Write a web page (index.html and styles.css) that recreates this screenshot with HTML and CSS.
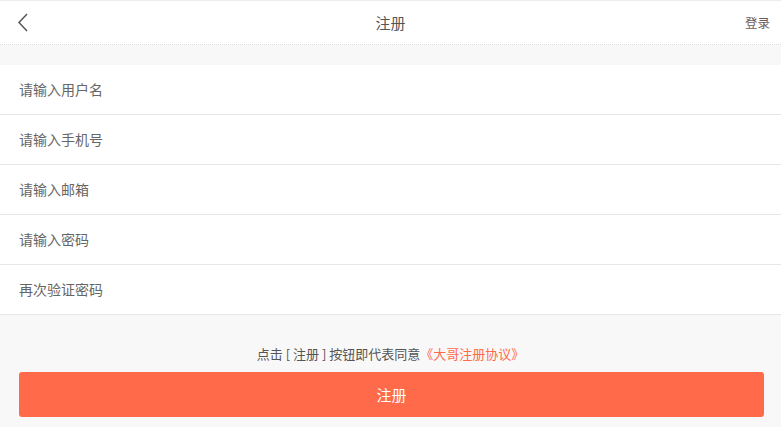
FILE: index.html
```html
<!DOCTYPE html>
<html lang="zh-CN">
<head>
  <meta charset="UTF-8">
  <meta name="viewport" content="width=device-width, initial-scale=1.0">
  <title>注册</title>
  <link rel="stylesheet" href="styles.css">
</head>
<body>
  <header class="topbar">
    <a class="back" href="#">
      <svg width="12" height="20" viewBox="0 0 12 20">
        <path d="M10 1 L2 9.5 L10 18" fill="none" stroke="#555" stroke-width="1.5"/>
      </svg>
    </a>
    <h1 class="title">注册</h1>
    <a class="login" href="#">登录</a>
  </header>

  <div class="form">
    <div class="row">请输入用户名</div>
    <div class="row">请输入手机号</div>
    <div class="row">请输入邮箱</div>
    <div class="row">请输入密码</div>
    <div class="row">再次验证密码</div>
  </div>

  <p class="agree">点击 [ 注册 ] 按钮即代表同意<span class="link">《大哥注册协议》</span></p>
  <button class="submit">注册</button>
</body>
</html>
```

FILE: styles.css
```css
body {
  margin: 0;
  font-family: "Noto Sans CJK SC", "Liberation Sans", sans-serif;
  background-color: #f8f8f8;
  color: #555;
}
.topbar {
  height: 43px;
  border-top: 1px solid #ececec;
  border-bottom: 1px dotted #dcdcdc;
  background: #fff;
  display: flex;
  align-items: center;
  justify-content: space-between;
  padding: 0 11px 0 17px;
}
.back {
  display: flex;
  width: 40px;
}
.title {
  margin: 0 0 0 -6px;
  font-size: 15px;
  font-weight: normal;
  color: #555;
}
.login {
  width: 40px;
  text-align: right;
  font-size: 12.5px;
  color: #6e5a5a;
  text-decoration: none;
}
.form {
  margin-top: 20px;
  background: #fff;
}
.row {
  height: 49px;
  line-height: 49px;
  padding-left: 19px;
  font-size: 14px;
  color: #666;
  border-bottom: 1px solid #e6e6e6;
}
.agree {
  margin: 26px 0 0;
  text-align: center;
  font-size: 13px;
  line-height: 26px;
  color: #555;
}
.link {
  color: #ff6a4b;
}
.submit {
  display: block;
  width: 745px;
  height: 45px;
  margin: 5px 0 0 19px;
  border: none;
  border-radius: 3px;
  background: #ff6a4b;
  color: #fff;
  font-family: inherit;
  font-size: 15px;
}
```
